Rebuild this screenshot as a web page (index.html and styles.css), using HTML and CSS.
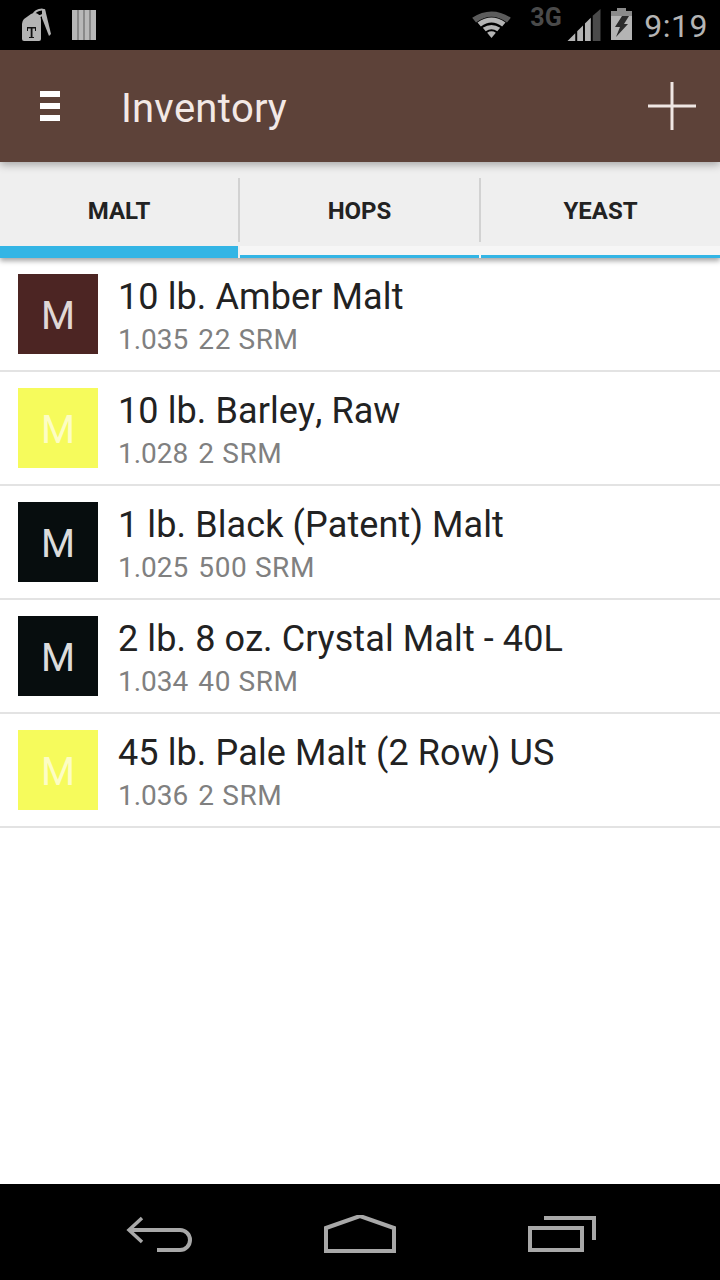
FILE: index.html
```html
<!DOCTYPE html>
<html lang="en">
<head>
<meta charset="utf-8">
<title>Inventory</title>
<link rel="stylesheet" href="styles.css">
</head>
<body>
<div class="phone">
  <header class="status">
    <div class="status-left">
      <svg class="ic-tag" width="32" height="34" viewBox="0 0 32 34">
        <path d="M1 16 Q1 13 3 11 L10 6 Q14 4 17 6 Q20 8 20 12 L20 31 Q20 33 18 33 L3 33 Q1 33 1 31 Z" fill="#b4b4b4"/>
        <path d="M12 9 Q12 4 18 2 Q24 0 23 5 Q21 9 15 8" fill="none" stroke="#b4b4b4" stroke-width="2"/>
        <path d="M21 2 L24 1 L30 26 L28 28 L21 10 Z" fill="#b4b4b4"/>
        <path d="M6 19h1v4h-1zM14 19h1v4h-1zM6 19h9v1.5h-9zM9.700 20h1.800v9h-1.800zM8 29h5v1h-5z" fill="#111"/>
      </svg>
      <svg class="ic-bars" width="24" height="30" viewBox="0 0 24 30">
        <rect x="0" y="0" width="24" height="30" fill="#b8b8b8"/>
        <path d="M6 0v30M12 0v30M18 0v30" stroke="#6a6a6a" stroke-width="1.2"/>
      </svg>
    </div>
    <div class="status-right">
      <svg class="ic-wifi" width="39" height="28" viewBox="0 0 40 29">
        <path d="M0 8 Q20 -5 40 8 L36 13 Q20 1 4 13 Z" fill="#5c5c5c"/>
        <path d="M5.500 13 Q20 2.500 34.500 13 L31 17 Q20 9 9 17 Z" fill="#b4b4b4"/>
        <path d="M11 18.500 Q20 12.500 29 18.500 L26 22 Q20 18 14 22 Z" fill="#b4b4b4"/>
        <path d="M15.500 23.500 Q20 20.500 24.500 23.500 L20 29 Z" fill="#b4b4b4"/>
      </svg>
      <span class="net">3G</span>
      <svg class="ic-signal" width="34" height="32" viewBox="0 0 34 33">
        <path d="M0 33 L8 25 V33 Z" fill="#b4b4b4"/>
        <path d="M10 23 L16 17 V33 H10 Z" fill="#b4b4b4"/>
        <path d="M18 15 L24 9 V33 H18 Z" fill="#b4b4b4"/>
        <path d="M26 7 L34 0 V33 H26 Z" fill="#4a4a4a"/>
      </svg>
      <svg class="ic-batt" width="21" height="32" viewBox="0 0 21 32">
        <path d="M6 0H15V3H21V32H0V3H6Z" fill="#b4b4b4"/>
        <path d="M6 0H15V3H21V8H0V3H6Z" fill="#8a8a8a"/>
        <path d="M11 8H18L13 16H17L5 29L9 19H4Z" fill="#2a2a2a"/>
      </svg>
      <span class="time">9:19</span>
    </div>
  </header>

  <div class="appbar">
    <div class="menu"><span></span><span></span><span></span></div>
    <h1 class="title">Inventory</h1>
    <svg class="plus" width="48" height="48" viewBox="0 0 48 48">
      <path d="M24 0V48M0 24H48" stroke="#efe6e3" stroke-width="3"/>
    </svg>
  </div>

  <nav class="tabs">
    <div class="tab tab-active"><span>MALT</span></div>
    <div class="tab tab-mid"><span>HOPS</span></div>
    <div class="tab tab-last"><span>YEAST</span></div>
  </nav>

  <main class="list">
    <div class="row">
      <div class="thumb thumb-amber">M</div>
      <div class="info"><div class="name">10 lb. Amber Malt</div><div class="meta"><span>1.035</span><span>22 SRM</span></div></div>
    </div>
    <div class="row">
      <div class="thumb thumb-pale">M</div>
      <div class="info"><div class="name">10 lb. Barley, Raw</div><div class="meta"><span>1.028</span><span>2 SRM</span></div></div>
    </div>
    <div class="row">
      <div class="thumb thumb-dark">M</div>
      <div class="info"><div class="name">1 lb. Black (Patent) Malt</div><div class="meta"><span>1.025</span><span>500 SRM</span></div></div>
    </div>
    <div class="row">
      <div class="thumb thumb-dark">M</div>
      <div class="info"><div class="name">2 lb. 8 oz. Crystal Malt - 40L</div><div class="meta"><span>1.034</span><span>40 SRM</span></div></div>
    </div>
    <div class="row">
      <div class="thumb thumb-pale">M</div>
      <div class="info"><div class="name">45 lb. Pale Malt (2 Row) US</div><div class="meta"><span>1.036</span><span>2 SRM</span></div></div>
    </div>
  </main>

  <footer class="navbar">
    <svg width="68" height="38" viewBox="0 0 68 38">
      <path d="M16 3 L3 15 L16 27" fill="none" stroke="#a8a8a8" stroke-width="3.500"/>
      <path d="M3 15 H54 A10 10 0 0 1 54 35 H31" fill="none" stroke="#a8a8a8" stroke-width="4"/>
    </svg>
    <svg class="nav-home" width="72" height="38" viewBox="0 0 72 38">
      <path d="M2 13 L36 1 L70 13 V36 H2 Z" fill="none" stroke="#a8a8a8" stroke-width="4"/>
    </svg>
    <svg width="68" height="36" viewBox="0 0 68 36">
      <path d="M16 2 H66 V24" fill="none" stroke="#a8a8a8" stroke-width="4"/>
      <rect x="2" y="12" width="52" height="22" fill="none" stroke="#a8a8a8" stroke-width="4"/>
    </svg>
  </footer>
</div>
</body>
</html>
```
FILE: styles.css
```css
* { box-sizing: border-box; }
html, body { margin: 0; padding: 0; }
body { background: #fff; font-family: Roboto, "Liberation Sans", sans-serif; font-kerning: none; }
.phone { width: 720px; height: 1280px; display: flex; flex-direction: column; overflow: hidden; background: #fff; }

.status { height: 50px; flex: none; background: #000; display: flex; justify-content: space-between; align-items: center; padding: 0 12px 0 21px; }
.status-left { display: flex; align-items: center; gap: 19px; }
.status-right { display: flex; align-items: center; }
.ic-wifi { margin-top: -2px; }
.net { font-size: 25px; font-weight: 700; color: #4a4a4a; width: 37px; margin-left: 19px; margin-top: -16px; }
.ic-signal { margin-top: 0; }
.ic-batt { margin-left: 10px; margin-top: -2px; }
.time { font-size: 32px; color: #b4b4b4; margin-left: 12px; letter-spacing: 0.5px; margin-top: 2px; }

.appbar { height: 112px; flex: none; background: #5d4239; display: flex; align-items: center; padding: 0 24px 0 40px; position: relative; z-index: 2; box-shadow: 0 3px 8px rgba(0,0,0,.3); }
.menu { width: 20px; height: 30px; display: flex; flex-direction: column; justify-content: space-between; }
.menu span { display: block; height: 6px; background: #fff; }
.title { margin: 4px 0 0 61px; font-size: 40px; font-weight: 400; letter-spacing: .2px; color: #f3e9e6; flex: 1; }

.tabs { height: 96px; flex: none; background: #efefef; display: flex; position: relative; z-index: 1; box-shadow: 0 3px 5px rgba(0,0,0,.35); font-kerning: normal; }
.tab { width: 240px; padding: 16px 2px 0 0; position: relative; display: flex; justify-content: center; background: linear-gradient(#efefef 84px, #f6f6f6 84px); }
.tab span { font-size: 24px; font-weight: 700; color: #222; height: 64px; line-height: 66px; }
.tab::after { content: ""; position: absolute; right: 0; top: 16px; height: 64px; width: 2px; background: #d2d2d2; }
.tab::before { content: ""; position: absolute; left: 0; right: 2px; bottom: 0; height: 3px; background: #33b5e5; }
.tab-mid { width: 241px; }
.tab-last { flex: 1; padding-right: 0; }
.tab-last::after { display: none; }
.tab-last::before { right: 0; }
.tab-active { background: #efefef; }
.tab-active::before { height: 12px; }

.list { flex: 1; background: #fff; }
.row { height: 114px; display: flex; align-items: flex-start; padding: 16px 0 0 18px; border-bottom: 2px solid #e3e3e3; }
.thumb { width: 80px; height: 80px; flex: none; display: flex; align-items: center; justify-content: center; font-size: 39px; padding-top: 4px; }
.thumb-amber { background: #4c2523; color: #e0d8d6; }
.thumb-pale { background: #f6fb5c; color: #fdfdc4; }
.thumb-dark { background: #070d0e; color: #dcdcdc; }
.info { margin-left: 20px; }
.name { font-size: 36px; line-height: 44px; margin-top: 1px; color: #222; white-space: nowrap; letter-spacing: .1px; }
.meta { font-size: 28px; line-height: 34px; margin-top: 4px; color: #808080; display: flex; gap: 10px; }
.meta span + span { letter-spacing: .6px; }

.navbar { height: 96px; flex: none; background: #000; display: flex; align-items: center; justify-content: space-between; padding: 4px 124px 0 126px; }
.nav-home { margin-right: 2px; }
```
